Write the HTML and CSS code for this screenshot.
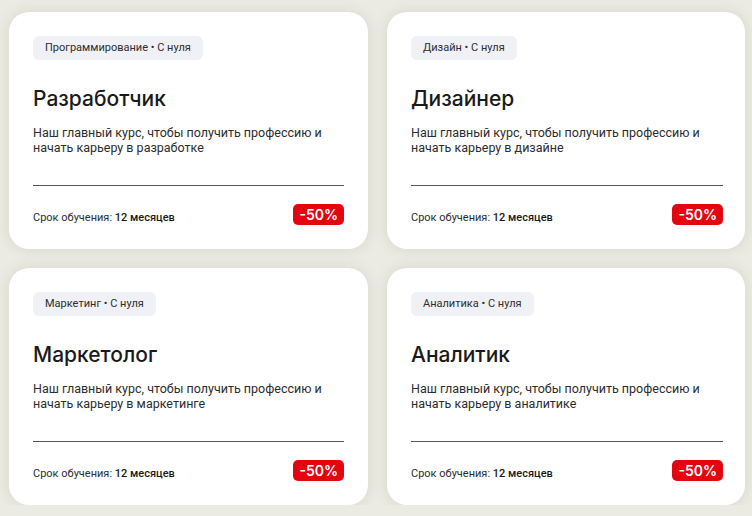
FILE: index.html
```
<!DOCTYPE html>
<html lang="ru">
<head>
<meta charset="utf-8">
<link rel="stylesheet" href="styles.css">
</head>
<body>
<div class="grid">
  <div class="card">
    <span class="tag">Программирование • С нуля</span>
    <h2 class="title">Разработчик</h2>
    <p class="desc">Наш главный курс, чтобы получить профессию и начать карьеру в разработке</p>
    <div class="divider"></div>
    <div class="footer">
      <span class="term">Срок обучения: <b>12 месяцев</b></span>
      <span class="badge">-50%</span>
    </div>
  </div>
  <div class="card">
    <span class="tag">Дизайн • С нуля</span>
    <h2 class="title">Дизайнер</h2>
    <p class="desc">Наш главный курс, чтобы получить профессию и начать карьеру в дизайне</p>
    <div class="divider"></div>
    <div class="footer">
      <span class="term">Срок обучения: <b>12 месяцев</b></span>
      <span class="badge">-50%</span>
    </div>
  </div>
  <div class="card">
    <span class="tag">Маркетинг • С нуля</span>
    <h2 class="title">Маркетолог</h2>
    <p class="desc">Наш главный курс, чтобы получить профессию и начать карьеру в маркетинге</p>
    <div class="divider"></div>
    <div class="footer">
      <span class="term">Срок обучения: <b>12 месяцев</b></span>
      <span class="badge">-50%</span>
    </div>
  </div>
  <div class="card">
    <span class="tag">Аналитика • С нуля</span>
    <h2 class="title">Аналитик</h2>
    <p class="desc">Наш главный курс, чтобы получить профессию и начать карьеру в аналитике</p>
    <div class="divider"></div>
    <div class="footer">
      <span class="term">Срок обучения: <b>12 месяцев</b></span>
      <span class="badge">-50%</span>
    </div>
  </div>
</div>
</body>
</html>
```
FILE: styles.css
```
html, body {
  margin: 0;
  padding: 0;
  background: #ebebe3;
  font-family: Roboto, "Noto Sans", sans-serif;
  color: #1a1a1a;
}

.grid {
  display: grid;
  grid-template-columns: 359px 358px;
  grid-auto-rows: 237px;
  column-gap: 19px;
  row-gap: 19px;
  padding: 12px 0 0 9px;
}

.card {
  background: #fff;
  border-radius: 20px;
  padding: 24px 24px 24px 24px;
  display: flex;
  flex-direction: column;
  align-items: flex-start;
  box-shadow: 0 0 14px rgba(90, 90, 60, 0.14);
}

.card:nth-child(even) {
  padding-right: 22px;
}

.tag {
  display: inline-block;
  height: 24px;
  line-height: 24px;
  padding: 0 12px;
  border-radius: 6px;
  background: #f0f1f6;
  color: #2d2d2d;
  font-size: 11px;
}

.title {
  margin: 27px 0 0;
  font-family: Inter, Roboto, sans-serif;
  font-size: 21px;
  line-height: 24px;
  font-weight: 500;
  color: #1a1a1a;
}

.desc {
  margin: 14px 0 0;
  font-size: 12.5px;
  line-height: 15px;
  color: #2d2d2d;
}

.divider {
  margin-top: auto;
  align-self: stretch;
  border-top: 1px solid #555;
}

.footer {
  margin-top: 18px;
  align-self: stretch;
  display: flex;
  justify-content: space-between;
  align-items: center;
}

.term {
  font-size: 11px;
  color: #2d2d2d;
  margin-top: 5px;
}

.term b {
  font-weight: 500;
  color: #1a1a1a;
}

.badge {
  height: 21px;
  line-height: 21px;
  padding: 0 6px;
  border-radius: 5px;
  background: #e30611;
  color: #fff;
  font-family: Inter, Roboto, sans-serif;
  font-size: 14px;
  font-weight: 600;
}
```
